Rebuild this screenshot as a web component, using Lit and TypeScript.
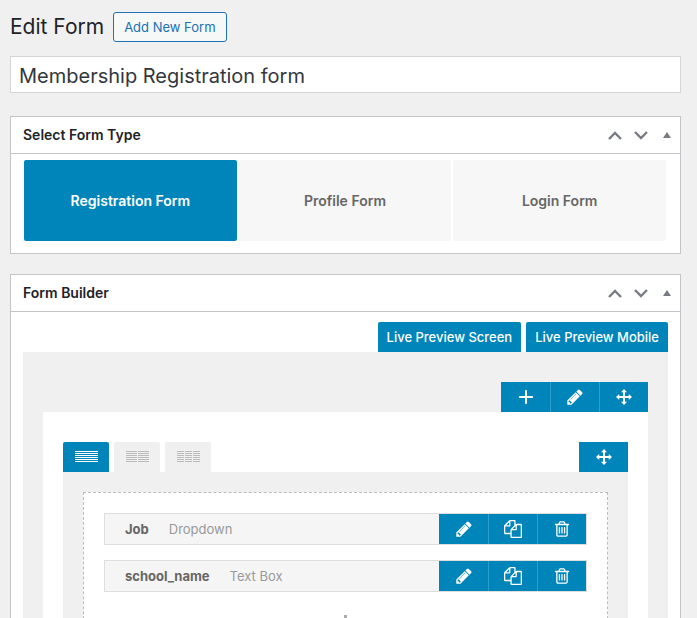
import { LitElement, html, css, svg } from "lit";
import { customElement, property, state } from "lit/decorators.js";
import { classMap } from "lit/directives/class-map.js";

const ICONS: Record<string, string> = {
  pencil:
    "M491 1536l91-91-235-235-91 91v107h128v128h107zm523-928q0-22-22-22-10 0-17 7l-542 542q-7 7-7 17 0 22 22 22 10 0 17-7l542-542q7-7 7-17zm-54-192l416 416-832 832h-416v-416zm683 96q0 53-37 90l-166 166-416-416 166-165q36-38 90-38 53 0 91 38l235 234q37 39 37 91z",
  move:
    "M896 0l340 360h-230v426h426v-230l360 340-360 340v-230h-426v426h230l-340 360-340-360h230v-426h-426v230l-360-340 360-340v230h426v-426h-230z",
  copy:
    "M1696 384q40 0 68 28t28 68v1216q0 40-28 68t-68 28h-960q-40 0-68-28t-28-68v-288h-544q-40 0-68-28t-28-68v-672q0-40 20-88t48-76l408-408q28-28 76-48t88-20h416q40 0 68 28t28 68v328q68-40 128-40h416zm-544 213l-299 299h299v-299zm-640-384l-299 299h299v-299zm196 647l316-316v-416h-384v416q0 40-28 68t-68 28h-416v640h512v-256q0-40 20-88t48-76zm956 804v-1152h-384v416q0 40-28 68t-68 28h-416v640h896z",
  trash:
    "M704 736v576q0 14-9 23t-23 9h-64q-14 0-23-9t-9-23v-576q0-14 9-23t23-9h64q14 0 23 9t9 23zm256 0v576q0 14-9 23t-23 9h-64q-14 0-23-9t-9-23v-576q0-14 9-23t23-9h64q14 0 23 9t9 23zm256 0v576q0 14-9 23t-23 9h-64q-14 0-23-9t-9-23v-576q0-14 9-23t23-9h64q14 0 23 9t9 23zm128 724v-948h-896v948q0 22 7 40.500t14.500 27 10.500 8.500h832q3 0 10.500-8.500t14.500-27 7-40.500zm-672-1076h448l-48-117q-7-9-17-11h-317q-10 2-17 11zm928 32v64q0 14-9 23t-23 9h-96v948q0 83-47 143.500t-113 60.500h-832q-66 0-113-58.500t-47-141.500v-952h-96q-14 0-23-9t-9-23v-64q0-14 9-23t23-9h309l70-167q15-37 54-63t79-26h320q40 0 79 26t54 63l70 167h309q14 0 23 9t9 23z",
  plus: "M784 128h224v656h656v224h-656v656h-224v-656h-656v-224h656z",
};

const controls = css`
  :host {
    display: block;
  }
  * {
    box-sizing: border-box;
  }
  button {
    margin: 0;
    padding: 0;
    border: 0;
    background: none;
    font: inherit;
    color: inherit;
    cursor: pointer;
  }
  svg {
    display: block;
  }
`;

/** Row of blue icon buttons. */
@customElement("icon-toolbar")
export class IconToolbar extends LitElement {
  static styles = [
    controls,
    css`
      .bar {
        display: flex;
        height: 100%;
        background: #0085ba;
        color: #fff;
      }
      .tool {
        display: flex;
        align-items: center;
        justify-content: center;
        width: 49px;
        height: 30px;
        fill: currentColor;
      }
      .tool + .tool {
        border-left: 1px solid #2e9ecb;
      }
    `,
  ];

  @property({ attribute: false }) tools: [string, string, number][] = [];

  render() {
    return html`<div class="bar">
      ${this.tools.map(
        ([icon, label, size]) => html`<button class="tool" aria-label=${label}>
          <svg width=${size} height=${size} viewBox="0 0 1792 1792"><path d=${ICONS[icon]}></path></svg>
        </button>`
      )}
    </div>`;
  }
}

/** Bordered panel with a title and the order / toggle controls. */
@customElement("meta-box")
export class MetaBox extends LitElement {
  static styles = [
    controls,
    css`
      .box {
        background: #fff;
        border: 1px solid #c3c4c7;
      }
      .head {
        display: flex;
        align-items: center;
        justify-content: space-between;
        height: 37px;
        padding: 0 6px 0 12px;
        border-bottom: 1px solid #c3c4c7;
      }
      .title {
        margin: 0;
        font-size: 14px;
        line-height: 20px;
        font-weight: 600;
        color: #1d2327;
      }
      .handles {
        display: flex;
      }
      .handle {
        display: flex;
        align-items: center;
        justify-content: center;
        width: 26px;
        height: 36px;
      }
      .handle:last-child {
        width: 14px;
        margin-left: 6px;
      }
      .chevron {
        fill: none;
        stroke: #787c82;
        stroke-width: 2.400;
      }
      .toggle {
        fill: #787c82;
      }
    `,
  ];

  @property() heading = "";

  render() {
    return html`<section class="box">
      <header class="head">
        <h2 class="title">${this.heading}</h2>
        <div class="handles">
          <button class="handle" aria-label="Move up">
            <svg class="chevron" width="14" height="10" viewBox="0 0 14 10"><path d="M1 9L7 3l6 6"></path></svg>
          </button>
          <button class="handle" aria-label="Move down">
            <svg class="chevron" width="14" height="10" viewBox="0 0 14 10"><path d="M1 2l6 6 6-6"></path></svg>
          </button>
          <button class="handle" aria-label="Toggle panel">
            <svg class="toggle" width="8" height="8" viewBox="0 0 8 8"><path d="M4 1l4 6H0z"></path></svg>
          </button>
        </div>
      </header>
      <slot></slot>
    </section>`;
  }
}

@customElement("app-root")
export class AppRoot extends LitElement {
  static styles = [
    controls,
    css`
      :host {
        height: 100vh;
        overflow: hidden;
        padding: 12px 16px 0 10px;
        box-sizing: border-box;
        background: #f0f0f0;
        font-family: Inter, "Liberation Sans", sans-serif;
        font-size: 13px;
        color: #3c434a;
      }
      .heading {
        display: flex;
        align-items: center;
        gap: 9px;
        height: 30px;
      }
      .page-title {
        margin: 0;
        font-size: 21px;
        line-height: 30px;
        font-weight: 400;
        color: #1d2327;
      }
      .add {
        height: 30px;
        padding: 0 10px;
        border: 1px solid #2271b1;
        border-radius: 3px;
        background: #f6f7f7;
        color: #2271b1;
      }
      .name {
        display: block;
        width: 100%;
        height: 37px;
        margin: 14px 0 23px;
        padding: 2px 8px 0;
        border: 1px solid #d5d5d8;
        border-radius: 0;
        background: #fff;
        font: inherit;
        font-size: 20px;
        color: #32373c;
      }
      .types {
        display: grid;
        grid-template-columns: repeat(3, 1fr);
        gap: 2px;
        padding: 6px 14px 12px 13px;
      }
      .type {
        height: 81px;
        border-radius: 2px;
        background: #f7f7f7;
        color: #666;
        font-size: 14px;
        font-weight: 600;
      }
      .type.active {
        background: #0085ba;
        color: #fff;
      }
      .builder {
        display: block;
        margin-top: 20px;
      }
      .content {
        padding: 10px 12px 20px;
      }
      .previews {
        display: flex;
        justify-content: flex-end;
        gap: 5px;
      }
      .preview {
        height: 30px;
        padding: 0 9px;
        border-radius: 2px 2px 0 0;
        background: #0085ba;
        color: #fff;
        font-weight: 500;
      }
      .canvas {
        padding: 30px 20px;
        background: #f0f0f0;
      }
      .end {
        display: flex;
        justify-content: flex-end;
      }
      .section {
        padding: 30px 20px;
        background: #fff;
      }
      .row-head {
        display: flex;
        justify-content: space-between;
      }
      .layouts {
        display: flex;
        gap: 5px;
      }
      .layout {
        display: flex;
        align-items: center;
        justify-content: center;
        width: 46px;
        height: 30px;
        border-radius: 2px 2px 0 0;
        background: #f0f0f0;
        fill: #bbb;
      }
      .layout.active {
        background: #0085ba;
        fill: #fff;
      }
      .row {
        padding: 20px;
        background: #f0f0f0;
      }
      .column {
        display: flex;
        flex-direction: column;
        gap: 15px;
        padding: 20px;
        border: 1px dashed #bbb;
        background: #fff;
      }
      .field {
        display: flex;
        align-items: center;
        height: 32px;
        border: 1px solid #ddd;
        background: #f5f5f5;
      }
      .field-name {
        padding-left: 20px;
        font-weight: 700;
        color: #666;
      }
      .field-kind {
        flex: 1;
        padding-left: 20px;
        color: #999;
      }
      .insert {
        align-self: center;
        padding-top: 7px;
        fill: #aaa;
      }
    `,
  ];

  @state() private type = 0;
  @state() private columns = 1;

  private lines(columns: number) {
    const spans = [[[1, 23]], [[1, 11], [13, 11]], [[1, 7], [9, 7], [17, 7]]][columns - 1];
    const rows = [0, 2, 4, 6, 8, 10];
    return html`<svg width="24" height="12" viewBox="0 0 24 12" shape-rendering="crispEdges">
      ${rows.map((y) => spans.map(([x, w]) => svg`<rect x=${x} y=${y} width=${w} height="1"></rect>`))}
    </svg>`;
  }

  render() {
    const types = ["Registration Form", "Profile Form", "Login Form"];
    const fields = [
      ["Job", "Dropdown"],
      ["school_name", "Text Box"],
    ];
    return html`
      <div class="heading">
        <h1 class="page-title">Edit Form</h1>
        <button class="add">Add New Form</button>
      </div>
      <input class="name" aria-label="Form name" .value=${"Membership Registration form"} />
      <meta-box heading="Select Form Type">
        <div class="types">
          ${types.map(
            (label, i) => html`<button
              class=${classMap({ type: true, active: this.type === i })}
              @click=${() => (this.type = i)}
            >${label}</button>`
          )}
        </div>
      </meta-box>
      <meta-box class="builder" heading="Form Builder">
        <div class="content">
          <div class="previews">
            <button class="preview">Live Preview Screen</button>
            <button class="preview">Live Preview Mobile</button>
          </div>
          <div class="canvas">
            <div class="end">
              <icon-toolbar .tools=${[["plus", "Add", 16], ["pencil", "Edit", 18], ["move", "Move", 16]]}></icon-toolbar>
            </div>
            <div class="section">
              <div class="row-head">
                <div class="layouts">
                  ${[1, 2, 3].map(
                    (n) => html`<button
                      class=${classMap({ layout: true, active: this.columns === n })}
                      aria-label="${n} column layout"
                      @click=${() => (this.columns = n)}
                    >${this.lines(n)}</button>`
                  )}
                </div>
                <icon-toolbar .tools=${[["move", "Move row", 16]]}></icon-toolbar>
              </div>
              <div class="row">
                <div class="column">
                  ${fields.map(
                    ([name, kind]) => html`<div class="field">
                      <span class="field-name">${name}</span>
                      <span class="field-kind">${kind}</span>
                      <icon-toolbar
                        .tools=${[["pencil", "Edit field", 18], ["copy", "Duplicate field", 18], ["trash", "Delete field", 18]]}
                      ></icon-toolbar>
                    </div>`
                  )}
                  <button class="insert" aria-label="Add field">
                    <svg width="24" height="24" viewBox="0 0 24 24"><path d="M10 1h3v10h10v3h-10v9h-3v-9H0v-3h10z"></path></svg>
                  </button>
                </div>
              </div>
            </div>
          </div>
        </div>
      </meta-box>
    `;
  }
}
